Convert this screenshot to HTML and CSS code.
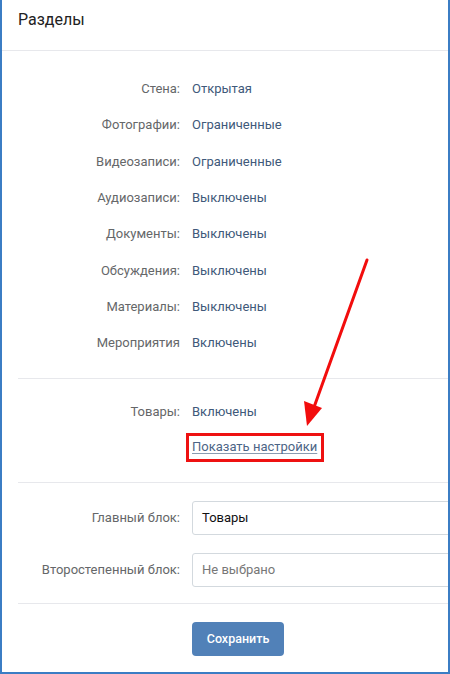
FILE: index.html
```html
<!DOCTYPE html>
<html lang="ru">
<head>
<meta charset="utf-8">
<title>Разделы</title>
<link rel="stylesheet" href="styles.css">
</head>
<body>
<div class="frame">
  <div class="header"><h1 class="title">Разделы</h1></div>

  <div class="section section-list">
    <div class="row"><div class="label">Стена:</div><div class="value">Открытая</div></div>
    <div class="row"><div class="label">Фотографии:</div><div class="value">Ограниченные</div></div>
    <div class="row"><div class="label">Видеозаписи:</div><div class="value">Ограниченные</div></div>
    <div class="row"><div class="label">Аудиозаписи:</div><div class="value">Выключены</div></div>
    <div class="row"><div class="label">Документы:</div><div class="value">Выключены</div></div>
    <div class="row"><div class="label">Обсуждения:</div><div class="value">Выключены</div></div>
    <div class="row"><div class="label">Материалы:</div><div class="value">Выключены</div></div>
    <div class="row"><div class="label">Мероприятия</div><div class="value">Включены</div></div>
  </div>
  <div class="divider"></div>

  <div class="section section-goods">
    <div class="row"><div class="label">Товары:</div><div class="value">Включены</div></div>
    <div class="row"><div class="label"></div><div class="value"><span class="highlight"><a class="link" href="#">Показать настройки</a></span></div></div>
  </div>
  <div class="divider"></div>

  <div class="section section-blocks">
    <div class="field"><div class="label">Главный блок:</div><div class="input">Товары</div></div>
    <div class="field"><div class="label">Второстепенный блок:</div><div class="input placeholder">Не выбрано</div></div>
  </div>
  <div class="divider"></div>

  <div class="section section-actions">
    <div class="field"><div class="label"></div><div><button class="button">Сохранить</button></div></div>
  </div>

  <svg class="arrow" width="450" height="674" viewBox="0 0 450 674">
    <line x1="367" y1="260" x2="313" y2="410" stroke="#f20d0d" stroke-width="3" stroke-linecap="round"/>
    <polygon points="307,426 304,401 322,408" fill="#f20d0d"/>
  </svg>
</div>
</body>
</html>
```

FILE: styles.css
```css
* { box-sizing: border-box; }
html, body { margin: 0; padding: 0; background: #fff; }
body {
  font-family: Roboto, "Noto Sans", "Liberation Sans", sans-serif;
  font-size: 13px;
  color: #222;
}
.frame {
  position: relative;
  width: 450px;
  height: 674px;
  overflow: hidden;
  border-left: 2px solid #3b7dc4;
  border-right: 2px solid #3b7dc4;
  border-bottom: 2px solid #3b7dc4;
}
.header {
  height: 51px;
  padding: 10px 0 0 16px;
  border-bottom: 1px solid #e7e8ec;
}
.title {
  margin: 0;
  font-size: 16px;
  font-weight: 400;
  line-height: 20px;
  color: #222;
}
.divider {
  margin-left: 16px;
  border-bottom: 1px solid #e7e8ec;
}
.section-list { padding: 20px 0 17px; }
.section-goods { padding: 14px 0 16px; }
.section-blocks {
  padding: 18px 0 16px;
  display: flex;
  flex-direction: column;
  gap: 18px;
}
.section-actions { padding: 18px 0 0; }
.row {
  display: grid;
  grid-template-columns: 178px 1fr;
  column-gap: 12px;
  height: 36.3px;
  align-items: center;
  line-height: 18px;
}
.label {
  text-align: right;
  color: #656769;
  white-space: nowrap;
}
.value {
  color: #40597a;
  white-space: nowrap;
}
.highlight {
  display: inline-block;
  margin-left: -6px;
  padding: 2px 4px 3px 3px;
  border: 3px solid #ee1111;
}
.link {
  color: #4c6586;
  text-decoration: underline;
  text-underline-offset: 2px;
  text-decoration-color: #8a9bb0;
}
.field {
  display: grid;
  grid-template-columns: 178px 300px;
  column-gap: 12px;
  align-items: center;
}
.input {
  height: 34px;
  border: 1px solid #d3d9de;
  border-radius: 3px;
  padding: 0 9px;
  display: flex;
  align-items: center;
  font-size: 13px;
  color: #111;
}
.input.placeholder { color: #777; }
.button {
  width: 92px;
  height: 34px;
  border: none;
  border-radius: 4px;
  background: #5181b8;
  color: #fff;
  font-family: inherit;
  font-size: 12.5px;
  font-weight: 500;
  padding: 0;
}
.arrow {
  position: absolute;
  left: -2px;
  top: 0;
  pointer-events: none;
}
```
